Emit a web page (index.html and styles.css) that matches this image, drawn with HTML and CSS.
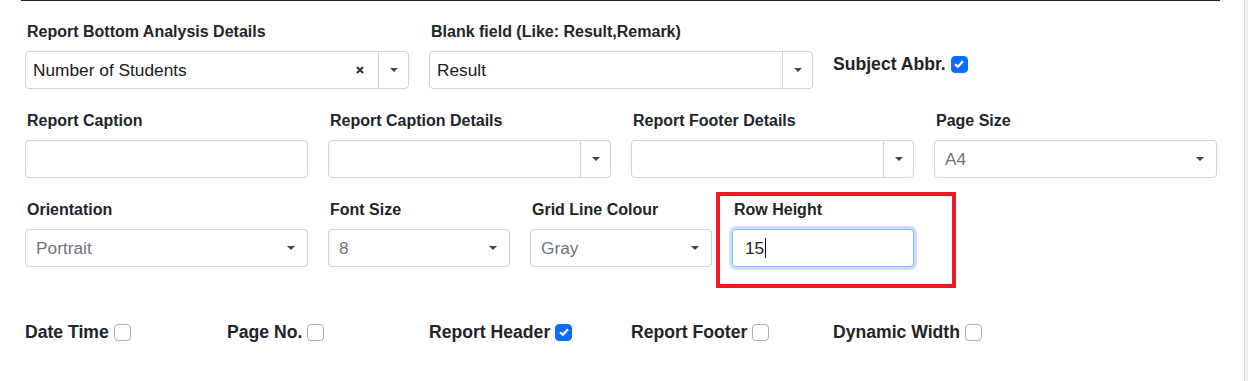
FILE: index.html
```html
<!DOCTYPE html>
<html lang="en">
<head>
    <meta charset="UTF-8">
    <title>Report Settings</title>
    <link rel="stylesheet" href="styles.css">
</head>
<body>
    <div class="top-rule"></div>
    <div class="page">
        <!-- row 1 -->
        <div class="row">
            <div class="col col-4">
                <label class="form-label">Report Bottom Analysis Details</label>
                <div class="select2">
                    <span class="sel-text">Number of Students</span>
                    <svg class="sel-clear" width="8" height="8" viewBox="0 0 8 8"><path d="M1 1L7 7M7 1L1 7" stroke="#333" stroke-width="2"/></svg>
                    <span class="sel-arrow"><i class="caret"></i></span>
                </div>
            </div>
            <div class="col col-4">
                <label class="form-label">Blank field (Like: Result,Remark)</label>
                <div class="select2">
                    <span class="sel-text">Result</span>
                    <span class="sel-arrow"><i class="caret"></i></span>
                </div>
            </div>
            <div class="col col-4">
                <div class="check-item subject">
                    <span>Subject Abbr.</span>
                    <span class="check on"><svg width="10" height="8" viewBox="0 0 10 8"><path d="M1 4.2L3.8 6.8L9 1.2" fill="none" stroke="#fff" stroke-width="2.2"/></svg></span>
                </div>
            </div>
        </div>

        <!-- row 2 -->
        <div class="row">
            <div class="col col-3">
                <label class="form-label">Report Caption</label>
                <div class="form-control"></div>
            </div>
            <div class="col col-3">
                <label class="form-label">Report Caption Details</label>
                <div class="select2">
                    <span class="sel-text"></span>
                    <span class="sel-arrow"><i class="caret"></i></span>
                </div>
            </div>
            <div class="col col-3">
                <label class="form-label">Report Footer Details</label>
                <div class="select2">
                    <span class="sel-text"></span>
                    <span class="sel-arrow"><i class="caret"></i></span>
                </div>
            </div>
            <div class="col col-3">
                <label class="form-label">Page Size</label>
                <div class="form-select">
                    <span class="sel-text">A4</span>
                    <i class="caret"></i>
                </div>
            </div>
        </div>

        <!-- row 3 -->
        <div class="row">
            <div class="col col-3">
                <label class="form-label">Orientation</label>
                <div class="form-select">
                    <span class="sel-text">Portrait</span>
                    <i class="caret"></i>
                </div>
            </div>
            <div class="col col-2">
                <label class="form-label">Font Size</label>
                <div class="form-select">
                    <span class="sel-text">8</span>
                    <i class="caret"></i>
                </div>
            </div>
            <div class="col col-2">
                <label class="form-label">Grid Line Colour</label>
                <div class="form-select">
                    <span class="sel-text">Gray</span>
                    <i class="caret"></i>
                </div>
            </div>
            <div class="col col-2 marked">
                <label class="form-label">Row Height</label>
                <div class="form-control focused">15<span class="text-cursor"></span></div>
                <div class="highlight-box"></div>
            </div>
        </div>

        <!-- row 4 -->
        <div class="row checks">
            <div class="col col-2">
                <div class="check-item"><span>Date Time</span><span class="check"></span></div>
            </div>
            <div class="col col-2">
                <div class="check-item"><span>Page No.</span><span class="check"></span></div>
            </div>
            <div class="col col-2">
                <div class="check-item"><span>Report Header</span><span class="check on"><svg width="10" height="8" viewBox="0 0 10 8"><path d="M1 4.2L3.8 6.8L9 1.2" fill="none" stroke="#fff" stroke-width="2.2"/></svg></span></div>
            </div>
            <div class="col col-2">
                <div class="check-item"><span>Report Footer</span><span class="check"></span></div>
            </div>
            <div class="col col-2">
                <div class="check-item"><span>Dynamic Width</span><span class="check"></span></div>
            </div>
        </div>
    </div>
    <div class="scroll-edge"></div>
</body>
</html>
```

FILE: styles.css
```css
* {
    margin: 0;
    padding: 0;
    box-sizing: border-box;
}

body {
    font-family: "Liberation Sans", Arial, sans-serif;
    color: #212529;
    background: #fff;
    width: 1248px;
    height: 381px;
    overflow: hidden;
    position: relative;
}

.top-rule {
    margin: 0 28px 0 21px;
    border-top: 1px solid #222;
}

.page {
    width: 1227px;
    padding: 20px 0 0 15px;
}

.row {
    display: flex;
}

.col {
    padding: 0 10px;
    margin-bottom: 21px;
    position: relative;
}

.col-4 { width: 404px; }
.col-3 { width: 303px; }
.col-2 { width: 202px; }

.form-label {
    display: block;
    font-size: 16px;
    font-weight: bold;
    line-height: 22px;
    margin-bottom: 8px;
    padding-left: 2px;
}

.form-control,
.form-select,
.select2 {
    height: 38px;
    border: 1px solid #ced4da;
    border-radius: 4px;
    display: flex;
    align-items: center;
    font-size: 17.3px;
    background: #fff;
}

.form-control {
    padding: 0 12px;
}

.form-control.focused {
    border-color: #86b7fe;
    box-shadow: 0 0 0 3px rgba(13, 110, 253, 0.22);
    color: #212529;
}

.text-cursor {
    display: inline-block;
    width: 1px;
    height: 20px;
    background: #111;
    margin-left: 1px;
}

.sel-text {
    flex: 1;
    padding-left: 7px;
}

.select2 .sel-text {
    color: #1a1a1a;
}

.form-select .sel-text {
    padding-left: 10px;
    color: #6c757d;
}

.sel-clear {
    margin-right: 14px;
}

.sel-arrow {
    width: 30px;
    height: 36px;
    border-left: 1px solid #d3d3d3;
    display: flex;
    align-items: center;
    justify-content: center;
}

.caret {
    width: 0;
    height: 0;
    border-left: 4px solid transparent;
    border-right: 4px solid transparent;
    border-top: 4px solid #444;
}

.form-select .caret {
    margin-right: 12px;
}

.check-item {
    display: flex;
    align-items: center;
    font-size: 17.6px;
    font-weight: bold;
    line-height: 22px;
}

.check-item.subject {
    margin-top: 32px;
}

.check {
    width: 17px;
    height: 17px;
    margin-left: 5px;
    border: 1px solid #a8adb3;
    border-radius: 4px;
    display: flex;
    align-items: center;
    justify-content: center;
}

.check.on {
    background: #0d6efd;
    border-color: #0d6efd;
}

.checks {
    padding-top: 33px;
}

.highlight-box {
    position: absolute;
    top: -7px;
    left: -6px;
    width: 240px;
    height: 96px;
    border: 4px solid #ec1c24;
}

.scroll-edge {
    position: absolute;
    top: 0;
    right: 0;
    width: 4px;
    height: 381px;
    background: #f1f1f1;
    border-left: 1px solid #dcdcdc;
}
```
